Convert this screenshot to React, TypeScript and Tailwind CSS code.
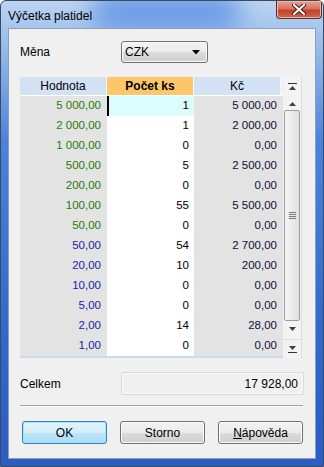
import React from "react";

const rows: [string, string, string, "g" | "b"][] = [
  ["5 000,00", "1", "5 000,00", "g"],
  ["2 000,00", "1", "2 000,00", "g"],
  ["1 000,00", "0", "0,00", "g"],
  ["500,00", "5", "2 500,00", "g"],
  ["200,00", "0", "0,00", "g"],
  ["100,00", "55", "5 500,00", "g"],
  ["50,00", "0", "0,00", "g"],
  ["50,00", "54", "2 700,00", "b"],
  ["20,00", "10", "200,00", "b"],
  ["10,00", "0", "0,00", "b"],
  ["5,00", "0", "0,00", "b"],
  ["2,00", "14", "28,00", "b"],
  ["1,00", "0", "0,00", "b"],
];

function Tri({ dir, bar }: { dir: "up" | "down"; bar?: boolean }) {
  return (
    <svg width="9" height="8" viewBox="0 0 9 8">
      {dir === "up" ? (
        <>
          {bar && <rect x="0" y="0" width="9" height="1" fill="#303030" />}
          <polygon points="1,7 8,7 4.5,3" fill="#404040" />
        </>
      ) : (
        <>
          <polygon points="1,1 8,1 4.5,5" fill="#404040" />
          {bar && <rect x="0" y="7" width="9" height="1" fill="#303030" />}
        </>
      )}
    </svg>
  );
}

function Button({ children, def }: { children: React.ReactNode; def?: boolean }) {
  return (
    <div
      className={
        def
          ? "w-[85px] h-[23px] rounded-[3px] border border-[#3c7fb1] flex items-center justify-center bg-[linear-gradient(#e5f4fc_0%,#d4edfb_50%,#bde4f8_51%,#a9dbf6_100%)] shadow-[inset_0_0_0_1px_#9ee8ff]"
          : "w-[85px] h-[23px] rounded-[3px] border border-[#707070] flex items-center justify-center bg-[linear-gradient(#f2f2f2_0%,#ebebeb_50%,#dddddd_51%,#cfcfcf_100%)] shadow-[inset_0_0_0_1px_#fcfcfc]"
      }
    >
      <span className="text-[12px] text-black">{children}</span>
    </div>
  );
}

export default function App() {
  return (
    <div className="w-[324px] h-[467px] font-['Liberation_Sans',Arial,sans-serif] bg-white">
      <div className="w-[324px] h-[467px] flex flex-col border border-[#3b4a5e] rounded-t-[6px] bg-[linear-gradient(180deg,#bcd4f2_0%,#8fb5ea_12%,#4c82dc_30%,#3468cc_70%,#2a5cc4_100%)] relative overflow-hidden">
        <div className="absolute left-[90px] top-[-10px] w-[150px] h-[40px] rounded-full bg-[#3f7ce0] opacity-60 blur-[12px]" />
        <div className="relative h-[27px] flex items-start">
          <div className="pl-[7px] pt-[6px] text-[12px] text-black">Výčetka platidel</div>
          <div className="ml-auto mr-[1px] w-[46px] h-[18px] rounded-b-[4px] border border-t-0 border-[#5a2a24] bg-[linear-gradient(#e8a493_0%,#d8735f_45%,#c0432c_55%,#d1654c_100%)] flex items-center justify-center shadow-[inset_0_0_0_1px_#f0b8a8]">
            <svg width="14" height="11" viewBox="0 0 14 11">
              <path d="M2 1 L12 10 M12 1 L2 10" stroke="#3a1a14" strokeWidth="4" strokeLinecap="round" />
              <path d="M2 1 L12 10 M12 1 L2 10" stroke="#ffffff" strokeWidth="2.2" strokeLinecap="round" />
            </svg>
          </div>
        </div>
        <div className="relative mx-[7px] mb-[7px] flex-1 border border-[#8d9fb8] bg-[#f0f0f0] flex flex-col px-[11px]">
          <div className="flex items-center mt-[12px] h-[22px]">
            <div className="w-[101px] text-[12px] text-black">Měna</div>
            <div className="w-[87px] h-[22px] rounded-[3px] border border-[#707070] bg-[linear-gradient(#f2f2f2_0%,#ebebeb_50%,#dddddd_51%,#cfcfcf_100%)] shadow-[inset_0_0_0_1px_#fafafa] flex items-center pl-[3px] pr-[7px]">
              <span className="text-[12px] text-black">CZK</span>
              <svg className="ml-auto" width="8" height="5" viewBox="0 0 8 5">
                <polygon points="0,0 8,0 4,4.5" fill="#000" />
              </svg>
            </div>
          </div>

          <div className="mt-[14px] flex w-[282px] h-[281px]">
            <div className="flex flex-col w-[263px]">
              <div className="flex h-[19px] border-b border-white text-[12px]">
                <div className="w-[87px] bg-[#d3e1f5] border-r border-[#f5f8fc] flex items-center justify-center text-black">Hodnota</div>
                <div className="w-[87px] bg-[#fbc76a] border-r border-[#f5f8fc] flex items-center justify-center font-bold text-black">Počet ks</div>
                <div className="w-[87px] bg-[#d3e1f5] border-r border-[#f5f8fc] flex items-center justify-center text-black">Kč</div>
                <div className="w-[2px] bg-[#f0f0f0]" />
              </div>
              <div className="flex flex-col text-[11.5px]">
                {rows.map((r, i) => (
                  <div key={i} className="flex h-[20px]">
                    <div
                      className={
                        "w-[87px] bg-[#e3e3e3] flex items-center justify-end pr-[6px] " +
                        (r[3] === "g" ? "text-[#1f7d08]" : "text-[#1c1ca8]")
                      }
                    >
                      {r[0]}
                    </div>
                    <div
                      className={
                        i === 0
                          ? "w-[87px] bg-[#dcfdfe] border-l-2 border-black flex items-center justify-end pr-[5px] text-black"
                          : "w-[87px] bg-white flex items-center justify-end pr-[5px] text-black"
                      }
                    >
                      {r[1]}
                    </div>
                    <div className="w-[89px] bg-[#e3e3e3] flex items-center justify-end pr-[6px] text-[#10103a]">
                      {r[2]}
                    </div>
                  </div>
                ))}
              </div>
              <div className="h-[2px] bg-[#c8daf0]" />
            </div>
            <div className="w-[19px] flex flex-col bg-[#f3f3f3] border-r border-[#dcdcdc]">
              <div className="h-[19px] flex items-center justify-center">
                <Tri dir="up" bar />
              </div>
              <div className="h-[14px] flex items-center justify-center">
                <Tri dir="up" />
              </div>
              <div className="mx-[1px] h-[211px] rounded-[2px] border border-[#9c9c9c] bg-[linear-gradient(90deg,#f6f6f6_0%,#ececec_50%,#dedede_100%)] flex items-center justify-center">
                <div className="flex flex-col gap-[1px]">
                  <div className="w-[7px] h-[1px] bg-[#7a7a7a]" />
                  <div className="w-[7px] h-[1px] bg-[#7a7a7a]" />
                  <div className="w-[7px] h-[1px] bg-[#7a7a7a]" />
                  <div className="w-[7px] h-[1px] bg-[#7a7a7a]" />
                </div>
              </div>
              <div className="h-[19px] flex items-center justify-center border-b border-[#e0e0e0]">
                <Tri dir="down" />
              </div>
              <div className="flex-1 flex items-center justify-center">
                <Tri dir="down" bar />
              </div>
            </div>
          </div>

          <div className="mt-[14px] flex items-center h-[23px]">
            <div className="w-[101px] text-[12px] text-black">Celkem</div>
            <div className="w-[183px] h-[23px] rounded-[2px] border border-[#d8d8d8] bg-[#f0f0f0] shadow-[inset_0_0_0_1px_#fafafa] flex items-center justify-end pr-[5px] text-[12px] text-black">
              17 928,00
            </div>
          </div>

          <div className="mt-[10px] w-[283px] h-[2px] border-t border-[#a0a0a0] border-b border-b-white" />

          <div className="mt-[14px] flex gap-[13px] pl-[2px]">
            <Button def>OK</Button>
            <Button>Storno</Button>
            <Button>
              <span className="underline">N</span>ápověda
            </Button>
          </div>
        </div>
      </div>
    </div>
  );
}
